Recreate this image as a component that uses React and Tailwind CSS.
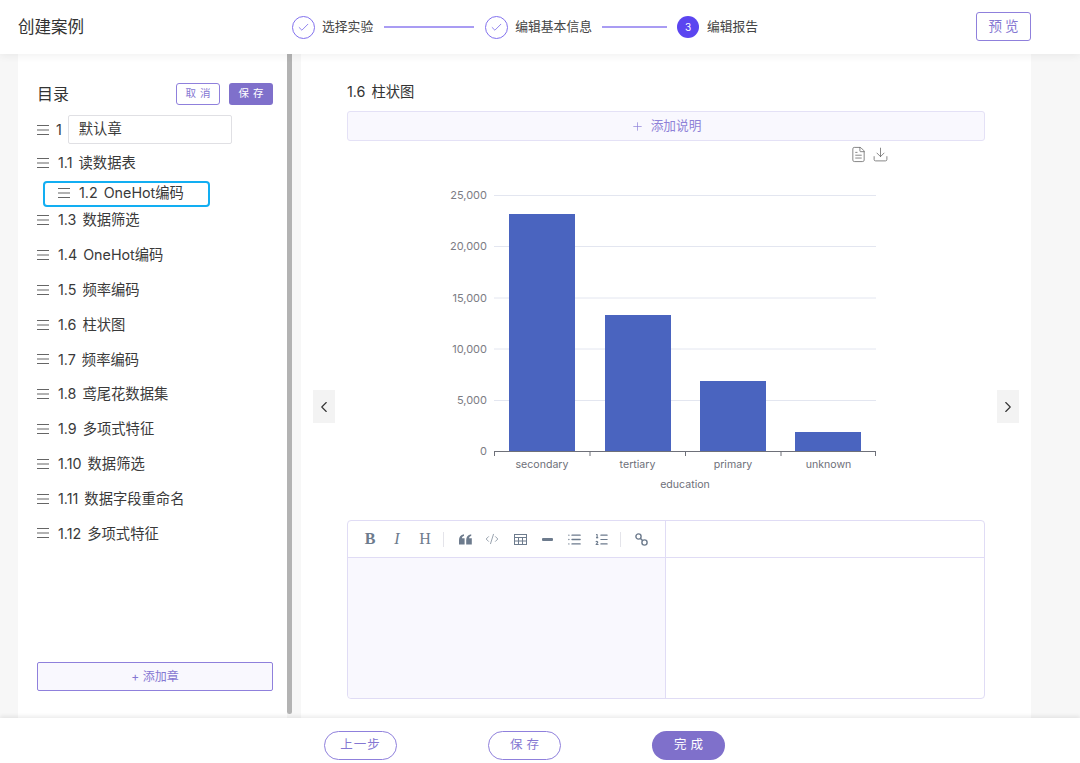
import React from "react";
import { Check, ChevronLeft, ChevronRight, Plus, FileText, Download, CodeXml, List, ListOrdered } from "lucide-react";

const Burger = () => (
  <svg width="12" height="12" viewBox="0 0 12 12" className="shrink-0 text-[#666]" stroke="currentColor" strokeWidth="1.2">
    <path d="M0 1.500H12M0 6H12M0 10.500H12" />
  </svg>
);

const Row = ({ label, className = "" }) => (
  <div className={`flex items-center gap-[9px] text-[14.300px] text-[#3a3a3a] [word-spacing:2px] ${className}`}>
    <Burger />
    <span>{label}</span>
  </div>
);

const Step = ({ n, label, done }) => (
  <div className="flex items-center">
    {done ? (
      <div className="flex h-[23px] w-[23px] items-center justify-center rounded-full border border-[#8271ee] text-[#6f5ee8]">
        <Check size={13} strokeWidth={1.400} />
      </div>
    ) : (
      <div className="flex h-[22px] w-[22px] items-center justify-center rounded-full bg-[#5b45f0] text-[10px] text-white">{n}</div>
    )}
    <span className={`text-[12.800px] text-[#444] ${done ? "ml-[7px]" : "ml-[8px]"}`}>{label}</span>
  </div>
);

const Line = ({ w, cls }) => <div className={`h-[1.500px] bg-[#a99cf3] ${w} ${cls}`} />;

const yTicks = [["25,000", 195], ["20,000", 246], ["15,000", 297.5], ["10,000", 348.5], ["5,000", 400]];
const bars = [[162, 214], [258, 315], [353, 381], [448, 432]];
const cats = [["secondary", 195], ["tertiary", 290.5], ["primary", 386], ["unknown", 481.5]];
const OY = 165;

const Chart = () => (
  <svg width="638" height="335" viewBox="0 0 638 335" className="block" style={{ fontFamily: "Inter, sans-serif" }}>
    {yTicks.map(([t, y]) => (
      <g key={t}>
        <text x="140" y={y - OY + 4} textAnchor="end" fontSize="11" fill="#7c7c84">{t}</text>
        <path d={`M147 ${y - OY + 0.5}H529`} stroke="#e3e6f0" strokeWidth="1" />
      </g>
    ))}
    <text x="140" y={451 - OY + 4} textAnchor="end" fontSize="11" fill="#7c7c84">0</text>
    {bars.map(([x, top]) => (
      <rect key={x} x={x} y={top - OY} width="66" height={451 - top} fill="#4a64bf" />
    ))}
    <path d="M147 286.500H529M147.500 286V291M243 286V291M338.500 286V291M434 286V291M528.500 286V291" stroke="#6e7079" strokeWidth="1" fill="none" />
    {cats.map(([t, x]) => (
      <text key={t} x={x} y="303" textAnchor="middle" fontSize="10.600" fill="#6e7079">{t}</text>
    ))}
    <text x="338" y="323" textAnchor="middle" fontSize="10.600" fill="#6e7079">education</text>
  </svg>
);

const Sep = () => <div className="h-[15px] w-px bg-[#e4e4ea]" />;

const Toolbar = () => (
  <div className="flex h-[36px] items-center text-[#6d7b8d]">
    <span className="ml-[15px] w-[14px] text-center font-['Liberation_Serif',serif] text-[16px] font-bold">B</span>
    <span className="ml-[13px] w-[14px] text-center font-['Liberation_Serif',serif] text-[16px] italic">I</span>
    <span className="ml-[14px] w-[14px] text-center font-['Liberation_Serif',serif] text-[16px]">H</span>
    <div className="ml-[11px]"><Sep /></div>
    <svg className="ml-[15px]" width="13" height="11" viewBox="0 0 13 11" fill="currentColor">
      <path d="M0 6C0 3 1.500 1 5 0.300V2C3.600 2.400 3 3.200 2.900 4.200H5.600V10.500H0ZM7.200 6C7.200 3 8.700 1 12.200 0.300V2C10.800 2.400 10.200 3.200 10.100 4.200H12.800V10.500H7.200Z" />
    </svg>
    <CodeXml className="ml-[13px]" size={14} strokeWidth={1.200} />
    <svg className="ml-[15px]" width="13" height="11" viewBox="0 0 13 11" fill="none" stroke="currentColor" strokeWidth="1">
      <rect x="0.500" y="0.500" width="12" height="10" />
      <path d="M0.500 3.500H12.500M0.500 7H12.500M4.500 3.500V10.500M8.500 3.500V10.500" />
    </svg>
    <div className="ml-[15px] h-[3px] w-[11px] rounded-[1px] bg-current" />
    <List className="ml-[14px]" size={15} strokeWidth={2.200} />
    <ListOrdered className="ml-[12px]" size={15} strokeWidth={1.800} />
    <div className="ml-[11px]"><Sep /></div>
    <svg className="ml-[14px]" width="13" height="13" viewBox="0 0 13 13" fill="none" stroke="currentColor" strokeWidth="1.400">
      <circle cx="3.500" cy="3.500" r="2.600" />
      <circle cx="9.500" cy="9.500" r="2.600" />
      <path d="M5.500 5.500L7.500 7.500" />
    </svg>
  </div>
);

export default function App() {
  return (
    <div className="flex h-[763px] w-[1080px] flex-col overflow-hidden bg-[#f7f7f7] font-['Inter','Noto_Sans_CJK_SC',sans-serif]">
      <header className="relative z-10 flex h-[54px] shrink-0 items-center bg-white shadow-[0_2px_8px_rgba(0,0,0,0.06)]">
        <h1 className="w-[292px] pl-[18px] text-[16.500px] font-normal text-[#333]">创建案例</h1>
        <Step label="选择实验" done />
        <Line w="w-[90px]" cls="mx-[11px]" />
        <Step label="编辑基本信息" done />
        <Line w="w-[65px]" cls="ml-[10px] mr-[10px]" />
        <Step n="3" label="编辑报告" />
        <button className="mb-[2px] ml-auto mr-[49px] h-[29px] w-[55px] rounded-[3px] border border-[#8f80dc] pl-[3px] text-[13.500px] tracking-[3px] text-[#8577d2]">预览</button>
      </header>

      <main className="flex h-[664px] shrink-0 pl-[18px]">
        <aside className="flex w-[269px] flex-col bg-white pl-[19px] pr-[14px]">
          <div className="mt-[29px] flex h-[22px] items-center">
            <span className="text-[16px] text-[#333]">目录</span>
            <button className="ml-auto h-[22px] w-[44px] rounded-[3px] border border-[#8f80dc] pl-[4px] text-[10.500px] tracking-[4px] text-[#8577d2]">取消</button>
            <button className="ml-[9px] h-[22px] w-[44px] rounded-[3px] bg-[#7f70cb] pl-[4px] text-[10.500px] tracking-[4px] text-white">保存</button>
          </div>
          <div className="mt-[10px] flex h-[29px] items-center text-[14.300px] text-[#3a3a3a]">
            <Burger />
            <span className="ml-[7px]">1</span>
            <div className="ml-[6px] flex h-[29px] w-[164px] items-center rounded-[2px] border border-[#e0e0e4] pb-[2px] pl-[10px]">默认章</div>
          </div>
          <Row label="1.1 读数据表" className="h-[37px]" />
          <div className="ml-[6px] flex h-[26px] w-[167px] items-center rounded-[4px] border-2 border-[#12aef2] pb-[2px] pl-[13px]">
            <Row label="1.2 OneHot编码" />
          </div>
          <Row label="1.3 数据筛选" className="mb-[4.600px] h-[26px]" />
          {[
            "1.4 OneHot编码", "1.5 频率编码", "1.6 柱状图", "1.7 频率编码", "1.8 鸢尾花数据集",
            "1.9 多项式特征", "1.10 数据筛选", "1.11 数据字段重命名", "1.12 多项式特征",
          ].map((l) => (
            <Row key={l} label={l} className="h-[34.800px]" />
          ))}
          <button className="mb-[27px] mt-auto h-[29px] w-full rounded-[2px] border border-[#8f80dc] bg-[#f9f8fe] text-[12px] text-[#8577d2]">+ 添加章</button>
        </aside>
        <div className="h-[660px] w-[5px] rounded-b-[3px] bg-[#b3b3b3]" />
        <section className="relative ml-[9px] flex w-[730px] flex-col bg-white px-[46px]">
          <h2 className="mt-[28px] h-[20px] text-[14.300px] font-normal leading-[20px] text-[#333] [word-spacing:2px]">1.6 柱状图</h2>
          <button className="mt-[9px] flex h-[30px] w-[638px] items-center justify-center gap-[7px] rounded-[3px] border border-[#e4e1f6] bg-[#f9f8fe] text-[12.700px] text-[#8f82d8]">
            <Plus size={13} strokeWidth={1.300} />
            添加说明
          </button>
          <div className="mb-[1px] mt-[4px] flex h-[19px] items-center gap-[5px] pl-[503px] text-[#666]">
            <FileText size={17} strokeWidth={1.100} />
            <Download size={17} strokeWidth={1.100} />
          </div>
          <Chart />
          <div className="mt-[20px] flex h-[179px] w-[638px] rounded-[4px] border border-[#e0dcf5]">
            <div className="flex w-[318px] flex-col border-r border-[#e0dcf5]">
              <Toolbar />
              <div className="flex-1 rounded-bl-[4px] border-t border-[#e0dcf5] bg-[#f9f8fe]" />
            </div>
            <div className="flex flex-1 flex-col">
              <div className="h-[36px]" />
              <div className="flex-1 border-t border-[#e0dcf5]" />
            </div>
          </div>
          <button className="absolute left-[12px] top-[336px] flex h-[33px] w-[22px] items-center justify-center bg-[#f3f3f3] text-[#333]">
            <ChevronLeft size={18} strokeWidth={1.500} />
          </button>
          <button className="absolute left-[696px] top-[336px] flex h-[33px] w-[22px] items-center justify-center bg-[#f3f3f3] text-[#333]">
            <ChevronRight size={18} strokeWidth={1.500} />
          </button>
        </section>
      </main>

      <footer className="relative z-10 flex flex-1 items-center gap-[91px] bg-white pl-[324px] pt-[9px] shadow-[0_-2px_4px_rgba(0,0,0,0.08)]">
        <button className="h-[29px] w-[73px] rounded-full border border-[#8f80dc] text-[12.500px] tracking-[1px] text-[#8577d2]">上一步</button>
        <button className="h-[29px] w-[73px] rounded-full border border-[#8f80dc] pl-[4px] text-[12.500px] tracking-[4px] text-[#8577d2]">保存</button>
        <button className="h-[29px] w-[73px] rounded-full bg-[#7f70cb] pl-[4px] text-[12.500px] tracking-[4px] text-white">完成</button>
      </footer>
    </div>
  );
}
